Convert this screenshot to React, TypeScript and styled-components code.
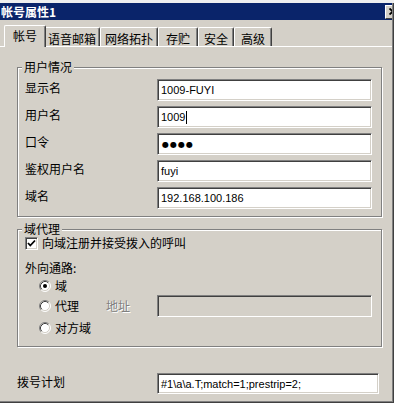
import React from 'react';
import styled, { createGlobalStyle } from 'styled-components';

const FACE = '#d4d0c8';

const GlobalStyle = createGlobalStyle`
  html, body {
    margin: 0;
    padding: 0;
    background: #fff;
  }
  body {
    font-family: "Noto Sans CJK SC", "Liberation Sans", sans-serif;
    font-size: 12px;
    color: #000;
  }
`;

const Window = styled.div`
  width: 394px;
  height: 403px;
  box-sizing: border-box;
  border-top: 3px solid #efefef;
  padding: 0 2px 2px 0;
  background: ${FACE};
  box-shadow: inset -1px -1px 0 #404040, inset -2px -2px 0 #808080;
  display: flex;
  flex-direction: column;
  overflow: hidden;
`;

const TitleBar = styled.div`
  height: 17px;
  background: #0a246a;
  color: #fff;
  font-weight: bold;
  font-size: 12px;
  line-height: 17px;
  padding-left: 1px;
  display: flex;
  align-items: center;
  justify-content: space-between;
  overflow: hidden;
`;

const CloseButton = styled.div`
  width: 16px;
  height: 14px;
  margin-right: -9px;
  box-sizing: border-box;
  background: ${FACE};
  border-top: 1px solid #fff;
  border-left: 1px solid #fff;
  border-right: 1px solid #404040;
  border-bottom: 1px solid #404040;
  display: flex;
  align-items: center;
  justify-content: center;
`;

const TabStrip = styled.div`
  margin-top: 5px;
  height: 21px;
  padding-left: 6px;
  display: flex;
  align-items: flex-end;
`;

const Tab = styled.div<{ $active?: boolean; $w: number }>`
  width: ${({ $w }) => $w}px;
  height: ${({ $active }) => ($active ? 22 : 19)}px;
  margin: ${({ $active }) => ($active ? '0 -2px -1px -2px' : '0')};
  box-sizing: border-box;
  background: ${FACE};
  border-top: 1px solid #fff;
  border-left: 1px solid #fff;
  border-right: 1px solid #404040;
  box-shadow: inset -1px 0 0 #808080;
  border-radius: 2px 2px 0 0;
  position: relative;
  z-index: ${({ $active }) => ($active ? 1 : 0)};
  display: flex;
  justify-content: center;
  padding-top: ${({ $active }) => ($active ? 3 : 4)}px;
  font-size: 12px;
  line-height: 14px;
`;

const Panel = styled.div`
  flex: 1;
  border-top: 1px solid #fff;
  padding-left: 17px;
  display: flex;
  flex-direction: column;
`;

const Group = styled.div<{ $mt: number }>`
  width: 365px;
  margin-top: ${({ $mt }) => $mt}px;
  box-sizing: border-box;
  border: 1px solid #808080;
  box-shadow: 1px 1px 0 #fff, inset 1px 1px 0 #fff;
  padding: 0 9px 0 7px;
  display: flex;
  flex-direction: column;
`;

const GroupTitle = styled.span`
  align-self: flex-start;
  margin: -8px 0 0 -3px;
  padding: 0 2px;
  background: ${FACE};
  line-height: 14px;
  height: 14px;
`;

const FieldRows = styled.div`
  margin-top: 5px;
  padding-bottom: 7px;
  display: flex;
  flex-direction: column;
  gap: 5px;
`;

const FieldRow = styled.div`
  display: flex;
  align-items: flex-start;
`;

const FieldLabel = styled.span<{ $w: number }>`
  width: ${({ $w }) => $w}px;
  padding-top: 2px;
  line-height: 14px;
`;

const TextBox = styled.div<{ $w: number; $h?: number; $disabled?: boolean }>`
  width: ${({ $w }) => $w}px;
  height: ${({ $h }) => $h ?? 22}px;
  box-sizing: border-box;
  background: ${({ $disabled }) => ($disabled ? FACE : '#fff')};
  border-top: 1px solid #808080;
  border-left: 1px solid #808080;
  border-bottom: 1px solid #fff;
  border-right: 1px solid #fff;
  box-shadow: inset 1px 1px 0 #404040, inset -1px -1px 0 ${FACE};
  padding-left: 3px;
  display: flex;
  align-items: center;
  font-family: "Liberation Sans", Arial, sans-serif;
  font-size: 11px;
  white-space: nowrap;
  overflow: hidden;
`;

const Caret = styled.span`
  display: inline-block;
  width: 1px;
  height: 13px;
  margin-left: 1px;
  background: #000;
`;

const PasswordDots = styled.span`
  font-family: "DejaVu Sans", sans-serif;
  font-size: 8px;
  letter-spacing: 1px;
  padding-left: 1px;
`;

const ProxyBody = styled.div`
  padding-bottom: 11px;
  display: flex;
  flex-direction: column;
`;

const CheckRow = styled.label`
  height: 14px;
  display: flex;
  align-items: center;
  gap: 4px;
  line-height: 14px;
`;

const CheckBox = styled.span`
  width: 13px;
  height: 13px;
  box-sizing: border-box;
  background: #fff;
  border-top: 1px solid #808080;
  border-left: 1px solid #808080;
  border-bottom: 1px solid #fff;
  border-right: 1px solid #fff;
  box-shadow: inset 1px 1px 0 #404040, inset -1px -1px 0 ${FACE};
  display: flex;
  align-items: center;
  justify-content: center;
`;

const PlainLabel = styled.div<{ $mt: number }>`
  margin-top: ${({ $mt }) => $mt}px;
  height: 14px;
  line-height: 14px;
`;

const RadioRow = styled.div<{ $mt: number; $h?: number }>`
  margin-top: ${({ $mt }) => $mt}px;
  height: ${({ $h }) => $h ?? 14}px;
  display: grid;
  grid-template-columns: 81px 51px 215px;
  align-items: center;
`;

const RadioOption = styled.label`
  padding-left: 14px;
  display: flex;
  align-items: center;
  gap: 4px;
  line-height: 14px;
`;

const DisabledText = styled.span`
  color: #808080;
  text-shadow: 1px 1px 0 #fff;
  line-height: 14px;
`;

const DialRow = styled.div`
  margin-top: 26px;
  display: flex;
  align-items: flex-start;
`;

const Radio = ({ checked }: { checked?: boolean }) => (
  <svg width="12" height="12" viewBox="0 0 12 12">
    <circle cx="6" cy="6" r="5" fill="#fff" />
    <path d="M2.11 9.89 A5.5 5.5 0 0 1 9.89 2.11" fill="none" stroke="#808080" />
    <path d="M9.89 2.11 A5.5 5.5 0 0 1 2.11 9.89" fill="none" stroke="#fff" />
    <path d="M2.82 9.18 A4.5 4.5 0 0 1 9.18 2.82" fill="none" stroke="#404040" />
    <path d="M9.18 2.82 A4.5 4.5 0 0 1 2.82 9.18" fill="none" stroke={FACE} />
    {checked && <circle cx="6" cy="6" r="2" fill="#000" />}
  </svg>
);

const tabs = [
  { label: '帐号', w: 42, active: true },
  { label: '语音邮箱', w: 56 },
  { label: '网络拓扑', w: 58 },
  { label: '存贮', w: 40 },
  { label: '安全', w: 36 },
  { label: '高级', w: 38 },
];

export default function App() {
  return (
    <>
      <GlobalStyle />
      <Window>
        <TitleBar>
          <span>帐号属性1</span>
          <CloseButton>
            <svg width="8" height="7" viewBox="0 0 8 7">
              <path d="M0.5 0.5 L7 6.5 M7 0.5 L0.5 6.5" stroke="#000" strokeWidth="1.8" />
            </svg>
          </CloseButton>
        </TitleBar>

        <TabStrip>
          {tabs.map((t) => (
            <Tab key={t.label} $w={t.w} $active={t.active}>
              {t.label}
            </Tab>
          ))}
        </TabStrip>

        <Panel>
          <Group $mt={20}>
            <GroupTitle>用户情况</GroupTitle>
            <FieldRows>
              <FieldRow>
                <FieldLabel $w={132}>显示名</FieldLabel>
                <TextBox $w={215}>1009-FUYI</TextBox>
              </FieldRow>
              <FieldRow>
                <FieldLabel $w={132}>用户名</FieldLabel>
                <TextBox $w={215}>
                  1009<Caret />
                </TextBox>
              </FieldRow>
              <FieldRow>
                <FieldLabel $w={132}>口令</FieldLabel>
                <TextBox $w={215}>
                  <PasswordDots>●●●●</PasswordDots>
                </TextBox>
              </FieldRow>
              <FieldRow>
                <FieldLabel $w={132}>鉴权用户名</FieldLabel>
                <TextBox $w={215}>fuyi</TextBox>
              </FieldRow>
              <FieldRow>
                <FieldLabel $w={132}>域名</FieldLabel>
                <TextBox $w={215}>192.168.100.186</TextBox>
              </FieldRow>
            </FieldRows>
          </Group>

          <Group $mt={12}>
            <GroupTitle>域代理</GroupTitle>
            <ProxyBody>
              <CheckRow>
                <CheckBox>
                  <svg width="9" height="9" viewBox="0 0 9 9">
                    <path d="M1 4 L3.3 6.5 L8 1.5" fill="none" stroke="#000" strokeWidth="1.8" />
                  </svg>
                </CheckBox>
                向域注册并接受拨入的呼叫
              </CheckRow>
              <PlainLabel $mt={11}>外向通路:</PlainLabel>
              <RadioRow $mt={4}>
                <RadioOption>
                  <Radio checked />域
                </RadioOption>
              </RadioRow>
              <RadioRow $mt={2} $h={22}>
                <RadioOption>
                  <Radio />代理
                </RadioOption>
                <DisabledText>地址</DisabledText>
                <TextBox $w={215} $disabled />
              </RadioRow>
              <RadioRow $mt={4}>
                <RadioOption>
                  <Radio />对方域
                </RadioOption>
              </RadioRow>
            </ProxyBody>
          </Group>

          <DialRow>
            <FieldLabel $w={140}>拨号计划</FieldLabel>
            <TextBox $w={222} $h={21}>#1\a\a.T;match=1;prestrip=2;</TextBox>
          </DialRow>
        </Panel>
      </Window>
    </>
  );
}
